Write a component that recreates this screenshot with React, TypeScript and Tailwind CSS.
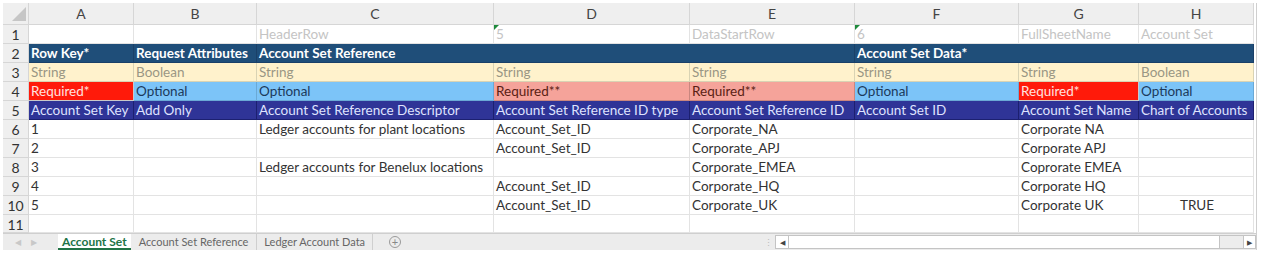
import React from 'react';

const FONT = "font-['Lato','Noto_Sans',sans-serif]";

type Cell = {
  text?: string;
  span?: number;
  cls?: string;
  tri?: boolean;
};

const grid = 'grid grid-cols-[26px_105px_123px_237px_196px_165px_164px_120px_115px]';

const letters = ['A', 'B', 'C', 'D', 'E', 'F', 'G', 'H'];

const hdr = 'bg-[#1f4e79] text-white font-bold border-r border-b border-[#1a4068]';
const typ = 'bg-[#fff2cc] text-[#9a9784] border-r border-b border-[#d9d3b4]';
const req = 'bg-[#ff1a0a] text-[#ffe4e0] border-r border-b border-[#c9c9c9]';
const opt = 'bg-[#7cc4f8] text-[#1b3a5c] border-r border-b border-[#6aa9d6]';
const req2 = 'bg-[#f5a39a] text-[#5a1d14] border-r border-b border-[#c9867f]';
const fld = 'bg-[#2f3497] text-[#dfe3ff] border-r border-b border-[#1c2070]';
const plain = 'bg-white text-[#333] border-r border-b border-[#e3e3e3]';
const meta = 'bg-white text-[#c4c4c4] border-r border-b border-[#e3e3e3]';

const rows: Cell[][] = [
  [
    { cls: meta },
    { cls: meta },
    { text: 'HeaderRow', cls: meta },
    { text: '5', cls: meta, tri: true },
    { text: 'DataStartRow', cls: meta },
    { text: '6', cls: meta, tri: true },
    { text: 'FullSheetName', cls: meta },
    { text: 'Account Set', cls: meta },
  ],
  [
    { text: 'Row Key*', cls: hdr },
    { text: 'Request Attributes', cls: hdr },
    { text: 'Account Set Reference', span: 3, cls: hdr },
    { text: 'Account Set Data*', span: 3, cls: hdr },
  ],
  [
    { text: 'String', cls: typ },
    { text: 'Boolean', cls: typ },
    { text: 'String', cls: typ },
    { text: 'String', cls: typ },
    { text: 'String', cls: typ },
    { text: 'String', cls: typ },
    { text: 'String', cls: typ },
    { text: 'Boolean', cls: typ },
  ],
  [
    { text: 'Required*', cls: req },
    { text: 'Optional', cls: opt },
    { text: 'Optional', cls: opt },
    { text: 'Required**', cls: req2 },
    { text: 'Required**', cls: req2 },
    { text: 'Optional', cls: opt },
    { text: 'Required*', cls: req },
    { text: 'Optional', cls: opt },
  ],
  [
    { text: 'Account Set Key', cls: fld },
    { text: 'Add Only', cls: fld },
    { text: 'Account Set Reference Descriptor', cls: fld },
    { text: 'Account Set Reference ID type', cls: fld },
    { text: 'Account Set Reference ID', cls: fld },
    { text: 'Account Set ID', cls: fld },
    { text: 'Account Set Name', cls: fld },
    { text: 'Chart of Accounts', cls: fld },
  ],
];

const data: string[][] = [
  ['1', '', 'Ledger accounts for plant locations', 'Account_Set_ID', 'Corporate_NA', '', 'Corporate NA', ''],
  ['2', '', '', 'Account_Set_ID', 'Corporate_APJ', '', 'Corporate APJ', ''],
  ['3', '', 'Ledger accounts for Benelux locations', '', 'Corporate_EMEA', '', 'Coprorate EMEA', ''],
  ['4', '', '', 'Account_Set_ID', 'Corporate_HQ', '', 'Corporate HQ', ''],
  ['5', '', '', 'Account_Set_ID', 'Corporate_UK', '', 'Corporate UK', 'TRUE'],
  ['', '', '', '', '', '', '', ''],
];

function RowNum({ n, h = 'h-[19px]' }: { n: number; h?: string }) {
  return (
    <div className={`${h} bg-[#efefef] border-r border-b border-[#d6d6d6] text-[#333] text-[14px] leading-[19px] text-center`}>
      {n}
    </div>
  );
}

export default function App() {
  return (
    <div className={`w-[1261px] h-[260px] bg-white overflow-hidden pl-[3px] pt-[3px] ${FONT}`}>
      <div className="w-[1254px] border-r border-[#cfcfcf]">
        <div className={grid}>
          {/* column letters */}
          <div className="h-[22px] bg-[#efefef] border-r border-b border-[#d6d6d6] relative">
            <div className="absolute right-[2px] bottom-[3px] w-0 h-0 border-l-[14px] border-l-transparent border-b-[14px] border-b-[#c6c6c6]" />
          </div>
          {letters.map((l) => (
            <div
              key={l}
              className="h-[22px] bg-[#efefef] border-r border-b border-[#d6d6d6] text-[#444] text-[14px] leading-[22px] text-center"
            >
              {l}
            </div>
          ))}

          {rows.map((r, i) => (
            <React.Fragment key={i}>
              <RowNum n={i + 1} />
              {r.map((c, j) => (
                <div
                  key={j}
                  className={`h-[19px] relative pl-[2px] text-[13.5px] leading-[19px] whitespace-nowrap overflow-hidden ${c.cls} ${
                    c.span === 3 ? 'col-span-3' : ''
                  }`}
                >
                  {c.tri && (
                    <div className="absolute left-0 top-0 w-0 h-0 border-r-[5px] border-r-transparent border-t-[5px] border-t-[#1e8a3c]" />
                  )}
                  {c.text}
                </div>
              ))}
            </React.Fragment>
          ))}

          {data.map((r, i) => (
            <React.Fragment key={'d' + i}>
              <RowNum n={i + 6} h={i === 5 ? 'h-[18px]' : 'h-[19px]'} />
              {r.map((t, j) => (
                <div
                  key={j}
                  className={`${i === 5 ? 'h-[18px]' : 'h-[19px]'} pl-[2px] text-[13.5px] leading-[19px] whitespace-nowrap overflow-hidden ${plain} ${
                    t === 'TRUE' ? 'text-center' : ''
                  }`}
                >
                  {t}
                </div>
              ))}
            </React.Fragment>
          ))}
        </div>

        {/* sheet tabs + scrollbar */}
        <div className="h-[17px] bg-[#ececec] border-t border-[#cfcfcf] flex items-stretch text-[11px] leading-[16px]">
          <div className="w-[55px] flex items-center gap-[10px] pl-[12px] text-[#c8c8c8] text-[8px]">
            <span>◀</span>
            <span>▶</span>
          </div>
          <div className="px-[4px] bg-white text-[#217346] font-bold border-b-2 border-[#217346] text-[12px]">Account Set</div>
          <div className="px-[8px] text-[#666] border-r border-[#cfcfcf]">Account Set Reference</div>
          <div className="px-[7px] text-[#666] border-r border-[#cfcfcf]">Ledger Account Data</div>
          <div className="pl-[16px] flex items-center">
            <div className="w-[12px] h-[12px] rounded-full border border-[#9a9a9a] text-[#888] text-[11px] leading-[10px] text-center">+</div>
          </div>
          <div className="ml-auto w-[492px] flex items-center">
            <div className="w-[8px] text-[#bbb] text-[9px] leading-[9px] tracking-[-1px]">⋮</div>
            <div className="ml-[3px] flex-1 h-[14px] flex border border-[#c4c4c4] bg-white">
              <div className="w-[13px] border-r border-[#c4c4c4] flex items-center justify-center text-[#444] text-[7px]">◀</div>
              <div className="flex-1 bg-white" />
              <div className="w-[24px] bg-[#ededed] border-l border-[#c4c4c4]" />
              <div className="w-[12px] border-l border-[#c4c4c4] flex items-center justify-center text-[#444] text-[7px]">▶</div>
            </div>
          </div>
        </div>
      </div>
    </div>
  );
}
